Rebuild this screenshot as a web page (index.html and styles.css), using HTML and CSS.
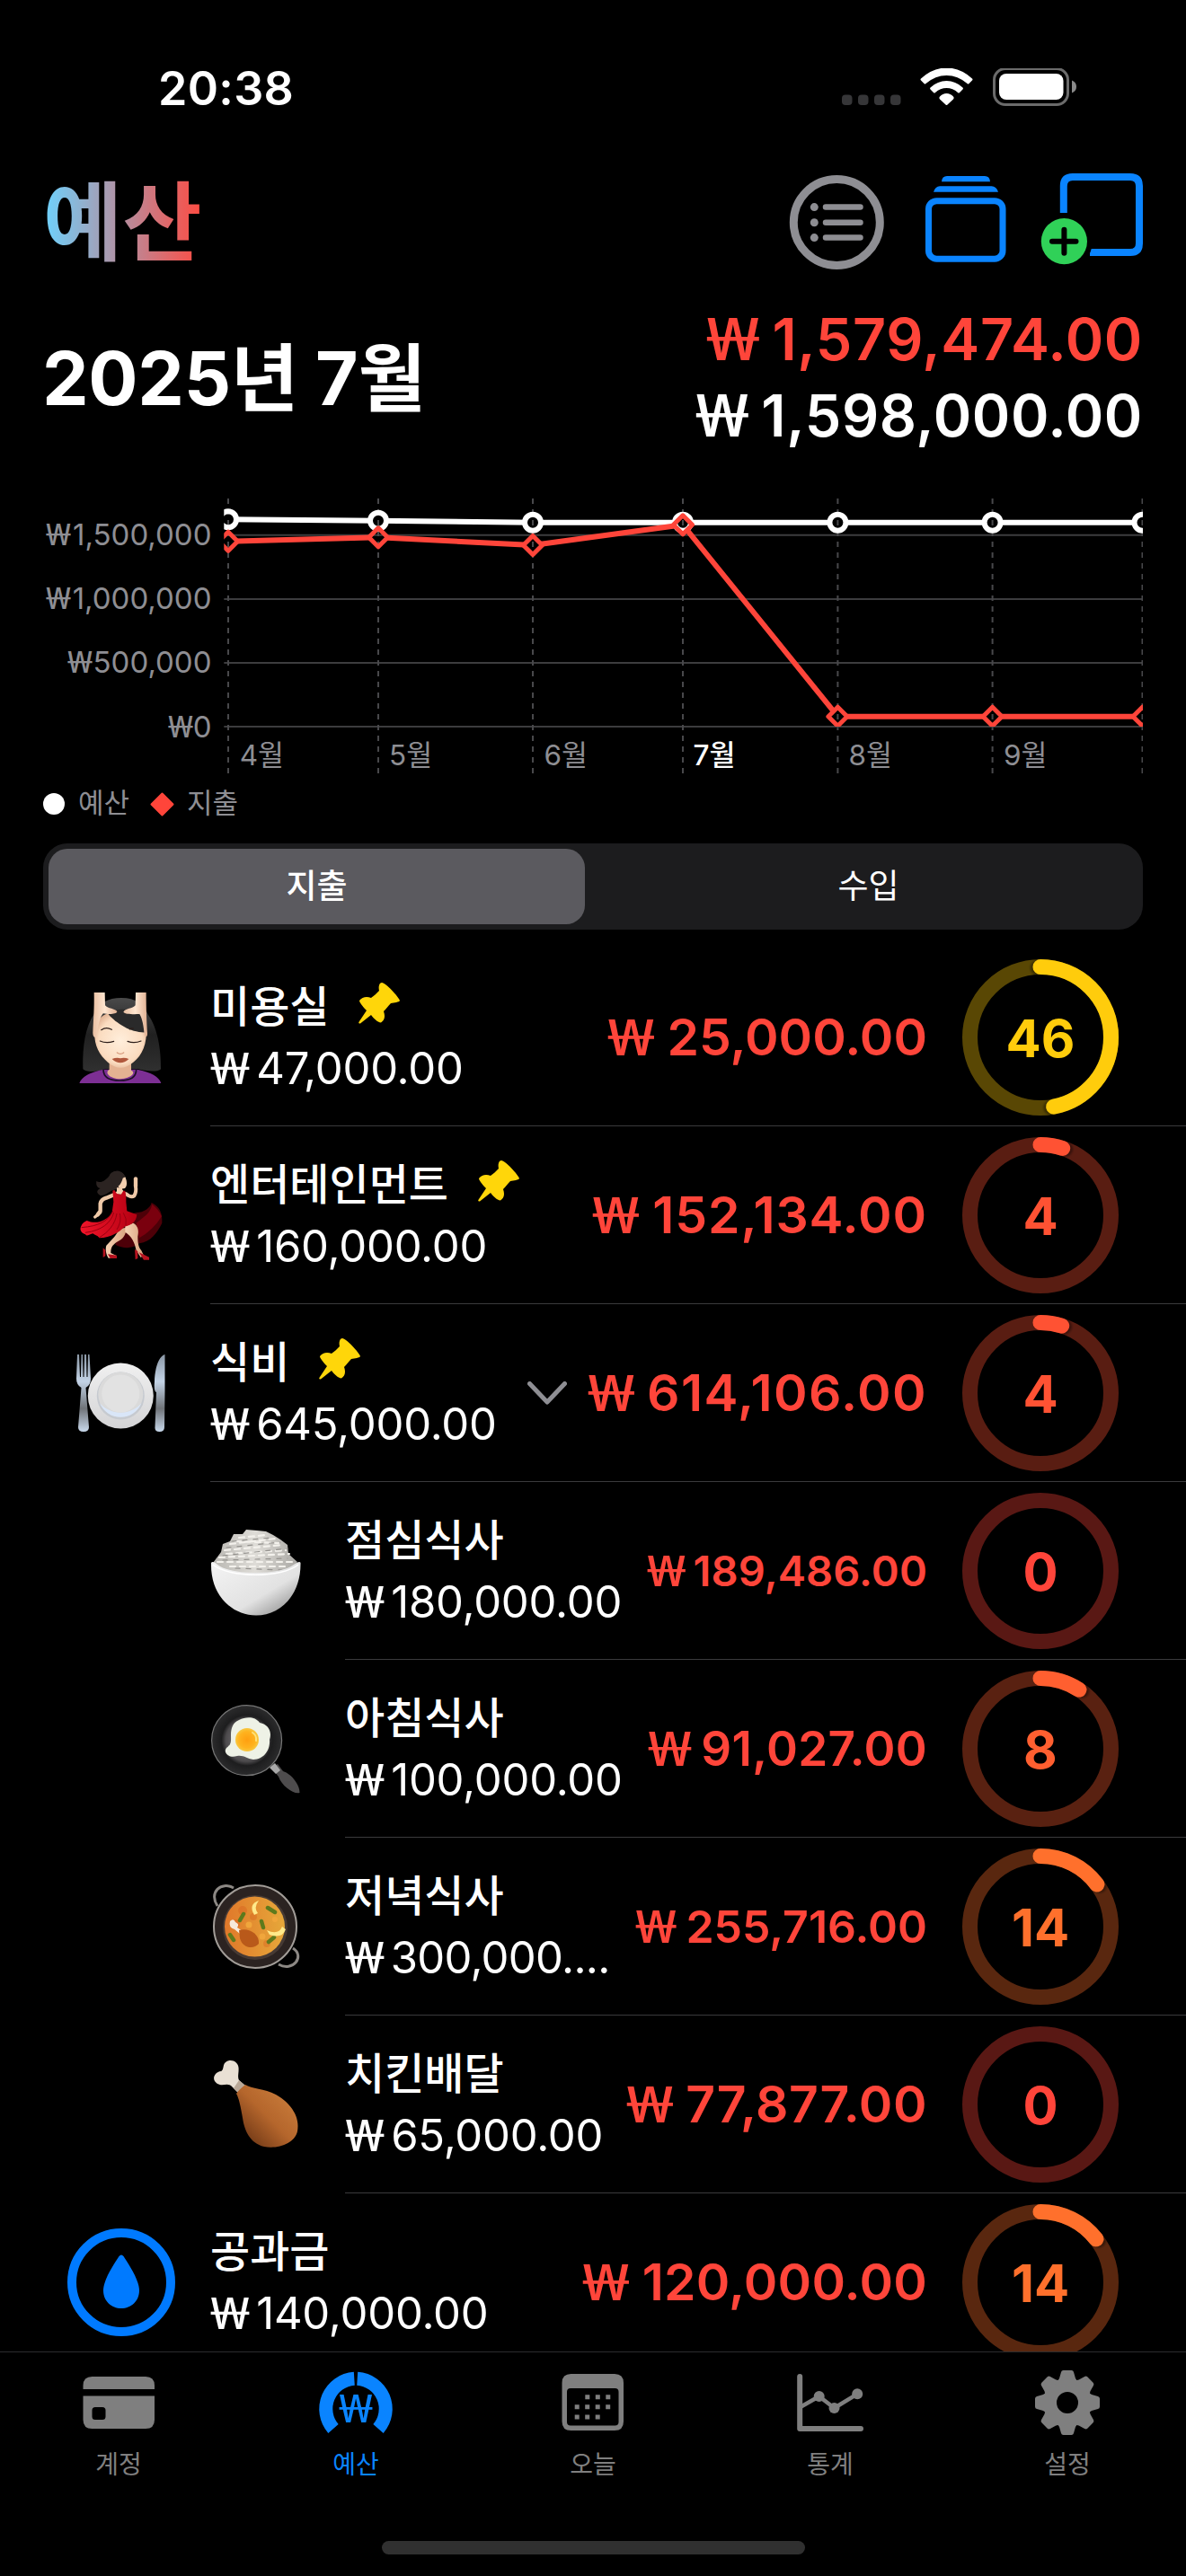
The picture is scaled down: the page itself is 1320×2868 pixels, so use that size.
FILE: index.html
```html
<!DOCTYPE html>
<html lang="ko">
<head>
<meta charset="utf-8">
<title>예산</title>
<link rel="stylesheet" href="styles.css">
</head>
<body>
<div class="status">
  <span class="status-time">20:38</span>
  <svg class="status-icons" width="264" height="44" viewBox="936 76 264 44">
    <g fill="#363638"><rect x="937" y="105.5" width="11.5" height="11.5" rx="4"/><rect x="955" y="105.5" width="11.5" height="11.5" rx="4"/><rect x="973" y="105.5" width="11.5" height="11.5" rx="4"/><rect x="991" y="105.5" width="11.5" height="11.5" rx="4"/></g>
    <g fill="#fff">
      <path d="M1025 87.500Q1038 75.500 1053.500 75.500T1082 87.500Q1083 88.500 1082 89.500L1078.500 93Q1077.500 94 1076.500 93Q1066 84 1053.500 84T1030.500 93Q1029.500 94 1028.500 93L1025 89.500Q1024 88.500 1025 87.500Z"/>
      <path d="M1035.500 97.500Q1043.500 90 1053.500 90T1071.500 97.500Q1072.500 98.500 1071.500 99.500L1068 103Q1067 104 1066 103Q1060.500 98 1053.500 98T1041 103Q1040 104 1039 103L1035.500 99.500Q1034.500 98.500 1035.500 97.500Z"/>
      <path d="M1046 107.500Q1049 104 1053.500 104T1061 107.500Q1062.500 109 1061 110.500L1054.500 116.500Q1053.500 117.500 1052.500 116.500L1046 110.500Q1044.500 109 1046 107.500Z"/>
    </g>
    <rect x="1106.500" y="76.500" width="82" height="40" rx="12.500" fill="none" stroke="#6b6b6b" stroke-width="3"/>
    <rect x="1112" y="82" width="71.500" height="29" rx="8" fill="#fff"/>
    <path d="M1193 89.500Q1198 91.500 1198 96.500T1193 103.500Z" fill="#8a8a8a"/>
  </svg>
</div>

<header class="header">
  <h1 class="title">예산</h1>
  <svg width="396" height="110" viewBox="878 192 396 110" fill="none">
    <g stroke="#8e8e93" stroke-linecap="round">
      <circle cx="931.300" cy="247.500" r="48" stroke-width="9"/>
      <path d="M919 230.600H957.500M919 247.700H957.500M919 264.600H957.500" stroke-width="6.500"/>
    </g>
    <g fill="#8e8e93"><circle cx="906.300" cy="230.600" r="4.500"/><circle cx="906.300" cy="247.700" r="4.500"/><circle cx="906.300" cy="264.600" r="4.500"/></g>
    <g fill="#0a84ff">
      <path d="M1048 202.200Q1048.500 196 1054 196H1096Q1101.500 196 1102 202.200Z"/>
      <path d="M1039 213.800Q1041 207.200 1046 207.200H1103.500Q1109 207.200 1111 213.800Z"/>
    </g>
    <rect x="1033.500" y="223.700" width="82.500" height="64.500" rx="9" stroke="#0a84ff" stroke-width="7"/>
    <path d="M1183.800 237V207Q1183.800 197 1193.800 197H1258Q1268 197 1268 207V271Q1268 281 1258 281H1213" stroke="#0a84ff" stroke-width="8"/>
    <circle cx="1184.400" cy="268.700" r="31.500" fill="#000"/>
    <circle cx="1184.400" cy="268.700" r="25.600" fill="#30d158"/>
    <path d="M1171 268.700H1197.500M1184.400 255.800V281.700" stroke="#000" stroke-width="6" stroke-linecap="round"/>
  </svg>
</header>

<section class="summary">
  <h2 class="month">2025년 7월</h2>
  <div class="totals">
    <div class="spent"><span class="won">₩</span> 1,579,474.00</div>
    <div><span class="won">₩</span> 1,598,000.00</div>
  </div>
</section>

<svg class="chart" width="1320" height="364" viewBox="0 506 1320 364">
  <defs>
    <clipPath id="plot"><rect x="249.300" y="540" width="1022.700" height="269"/></clipPath>
    <clipPath id="frame"><rect x="249.300" y="540" width="1022.700" height="330"/></clipPath>
    <mask id="cutBudget" maskUnits="userSpaceOnUse" x="0" y="506" width="1320" height="364">
      <rect x="0" y="506" width="1320" height="364" fill="#fff"/>
      <g fill="#000"><circle cx="254" cy="578.300" r="8"/><circle cx="421" cy="579.700" r="8"/><circle cx="593" cy="581.700" r="8"/><circle cx="760" cy="581.700" r="8"/><circle cx="932.400" cy="581.700" r="8"/><circle cx="1104.600" cy="581.700" r="8"/><circle cx="1271.500" cy="581.700" r="8"/></g>
    </mask>
    <mask id="cutSpent" maskUnits="userSpaceOnUse" x="0" y="506" width="1320" height="364">
      <rect x="0" y="506" width="1320" height="364" fill="#fff"/>
      <path fill="#000" d="M246 602.700l8-8 8 8-8 8zM413 598.300l8-8 8 8-8 8zM585 607l8-8 8 8-8 8zM752 584.300l8-8 8 8-8 8zM924.400 797.700l8-8 8 8-8 8zM1096.600 797.700l8-8 8 8-8 8zM1263.500 797.700l8-8 8 8-8 8z"/>
    </mask>
  </defs>
  <path class="grid" d="M249.300 595.700H1272M249.300 667H1272M249.300 738H1272M249.300 809H1272"/>
  <path class="grid grid-dash" clip-path="url(#frame)" d="M254 555V861M421 555V861M593 555V861M760 555V861M932.400 555V861M1104.600 555V861M1271.500 555V861"/>
  <g clip-path="url(#plot)" fill="none" stroke-width="6">
    <path mask="url(#cutBudget)" stroke="#fff" d="M254 578.300L421 579.700L593 581.700H1271.500"/>
    <g stroke="#fff"><circle cx="254" cy="578.300" r="9"/><circle cx="421" cy="579.700" r="9"/><circle cx="593" cy="581.700" r="9"/><circle cx="760" cy="581.700" r="9"/><circle cx="932.400" cy="581.700" r="9"/><circle cx="1104.600" cy="581.700" r="9"/><circle cx="1271.500" cy="581.700" r="9"/></g>
    <path mask="url(#cutSpent)" stroke="#ff453a" stroke-linejoin="round" d="M254 602.700L421 598.300L593 607L760 584.300L932.400 797.700H1271.500"/>
    <path stroke="#ff453a" stroke-width="5" stroke-linejoin="round" d="M243.500 602.700l10.500-10.500 10.500 10.500-10.500 10.500zM410.500 598.300l10.500-10.500 10.500 10.500-10.500 10.500zM582.500 607l10.500-10.500 10.500 10.500-10.500 10.500zM749.500 584.300l10.500-10.500 10.500 10.500-10.500 10.500zM921.900 797.700l10.500-10.500 10.500 10.500-10.500 10.500zM1094.100 797.700l10.500-10.500 10.500 10.500-10.500 10.500zM1261 797.700l10.500-10.500 10.500 10.500-10.500 10.500z"/>
  </g>
  <g class="axis axis-y">
    <text y="607.300"><tspan class="axis-won" x="51" textLength="28" lengthAdjust="spacingAndGlyphs">₩</tspan><tspan x="235.500">1,500,000</tspan></text>
    <text y="678.300"><tspan class="axis-won" x="51" textLength="28" lengthAdjust="spacingAndGlyphs">₩</tspan><tspan x="235.500">1,000,000</tspan></text>
    <text y="749.300"><tspan class="axis-won" x="75" textLength="28" lengthAdjust="spacingAndGlyphs">₩</tspan><tspan x="235.500">500,000</tspan></text>
    <text y="820.600"><tspan class="axis-won" x="187" textLength="28" lengthAdjust="spacingAndGlyphs">₩</tspan><tspan x="235.500">0</tspan></text>
  </g>
  <g class="axis">
    <text x="266.700" y="852">4월</text>
    <text x="433" y="852">5월</text>
    <text x="605.500" y="852">6월</text>
    <text x="771.500" y="852" class="axis-now">7월</text>
    <text x="944.500" y="852">8월</text>
    <text x="1117" y="852">9월</text>
  </g>
</svg>

<div class="legend">
  <svg width="24" height="24" viewBox="0 0 24 24"><circle cx="12" cy="12" r="12" fill="#fff"/></svg>
  <span class="legend-name">예산</span>
  <svg width="27" height="27" viewBox="0 0 27 27"><path d="M13.500 1.500L25.500 13.500L13.500 25.500L1.500 13.500Z" fill="#ff453a" stroke="#ff453a" stroke-width="2" stroke-linejoin="round"/></svg>
  <span class="legend-name">지출</span>
</div>

<div class="segmented">
  <div class="segment segment-on">지출</div>
  <div class="segment">수입</div>
</div>

<main class="list">
  <div class="row salon">
    <svg class="icon" viewBox="-24 6 378 378">
      <defs>
        <linearGradient id="hair" x1="0" y1="0" x2="0" y2="1"><stop offset="0" stop-color="#4a4a4a"/><stop offset=".5" stop-color="#202020"/><stop offset="1" stop-color="#303030"/></linearGradient>
        <radialGradient id="face" cx=".5" cy=".5" r=".6"><stop offset="0" stop-color="#ffeedb"/><stop offset=".7" stop-color="#fbdcc0"/><stop offset="1" stop-color="#dba888"/></radialGradient>
        <linearGradient id="arm" x1="0" y1="0" x2="1" y2="0"><stop offset="0" stop-color="#e9bfa2"/><stop offset=".5" stop-color="#ffe6d0"/><stop offset="1" stop-color="#e0b092"/></linearGradient>
      </defs>
      <path fill="url(#hair)" d="M165 63C215 63 240 85 255 120C285 160 299 235 297 300C290 312 245 308 220 300H110C85 312 45 312 37 300C35 225 45 160 75 115C90 80 120 63 165 63Z"/>
      <path fill="#7d2f94" d="M25 348C33 325 60 312 105 302H218C265 312 290 325 298 348Z"/>
      <path fill="#e4b292" d="M125 275H198V305C215 312 200 330 162 334C125 332 108 312 125 302Z"/>
      <path fill="none" stroke="#1c0f26" stroke-width="5" d="M105 302C105 330 130 339 160 339S215 330 215 302"/>
      <path fill="url(#face)" d="M76 180C80 145 95 120 122 115C165 120 200 150 248 165C252 215 235 255 205 278C175 302 150 302 120 278C92 255 74 220 76 180Z"/>
      <path fill="#2a2a2a" d="M122 118C150 150 200 182 250 178L246 130C225 100 150 90 122 118Z"/>
      <g fill="none" stroke="#2b1c18" stroke-width="3.500" stroke-linecap="round"><path d="M94 207Q115 216 140 208M186 208Q208 216 231 207"/><path d="M98 170Q115 158 133 169M193 168Q200 163 205 165"/></g>
      <path fill="none" stroke="#d79b7d" stroke-width="4" stroke-linecap="round" d="M151 246Q162 254 173 246"/>
      <path fill="#b0583d" d="M134 267Q150 261 162 265Q175 261 190 267Q176 280 162 280T134 267Z"/>
      <path fill="url(#arm)" d="M74 45H110L111 88C120 100 145 98 151 109C149 119 120 118 105 115C92 125 84 180 82 192C76 199 70 192 70 180C72 135 75 100 74 45Z"/>
      <path fill="url(#arm)" d="M213 45H248C248 100 250 150 252 180C253 196 244 196 242 186C240 160 235 130 226 117C205 118 178 118 172 110C178 97 203 100 212 88Z"/>
    </svg>
    <div class="body">
      <div class="info"><div class="name">미용실<svg class="pin" viewBox="0 0 46 46"><path d="M26 0C30 0 45 16 46 20C45 22 40 22 36 23C33 26 31 29 28 32C30 38 29 42 25 44.500C21 44 17 40 14 36L2 45.500Q-1 46 1 43L9 31C5 27 1 22 1 20C4 16 9 15 14 17C17 15 20 12 23 9C22 5 23 0 26 0Z"/></svg></div><div class="limit"><span class="won">₩</span> 47,000.00</div></div>
      <div class="amount"><span class="won">₩</span> 25,000.00</div>
      <svg class="ring ring-late" viewBox="0 0 174 174"><circle class="track" cx="87" cy="87" r="78.500"/><circle class="arc" cx="87" cy="87" r="78.500" pathLength="100" stroke-dasharray="47 100"/><text x="87" y="109">46</text></svg>
    </div>
  </div>

  <div class="row fun">
    <svg class="icon" viewBox="-24 -15 378 378">
      <defs>
        <linearGradient id="dress" x1="0" y1="0" x2="1" y2="0"><stop offset="0" stop-color="#f2152a"/><stop offset="1" stop-color="#b30012"/></linearGradient>
        <linearGradient id="skin" x1="0" y1="0" x2="1" y2="0"><stop offset="0" stop-color="#f6d3b4"/><stop offset="1" stop-color="#d9a27e"/></linearGradient>
      </defs>
      <path fill="#4d0008" d="M160 180L215 165C240 165 262 150 266 132C292 145 303 165 301 200C285 232 265 262 225 268C200 288 170 285 145 272Z"/>
      <path fill="#7a000e" d="M215 200L240 180Q262 165 268 138Q290 155 300 178Q270 225 225 250Z"/>
      <path fill="url(#skin)" d="M157 220L182 215C180 240 175 250 148 265C135 275 130 282 130 300L150 310V317H122C112 300 112 285 115 275C135 255 150 240 157 220Z"/>
      <path fill="url(#skin)" d="M178 210L205 200C222 210 224 225 220 245C220 265 222 280 232 292L240 308L230 315L215 292C210 265 200 245 178 230Z"/>
      <g fill="#b5121f"><path d="M104 283L112 290V310L104 315ZM120 304L150 308V318H128ZM210 288L220 294V318L212 322ZM224 298L258 314V323H240Z"/></g>
      <path fill="#2b2321" d="M178 46C170 22 140 20 127 38C118 55 95 70 82 60C80 75 85 82 95 84C85 90 78 98 95 108C115 110 125 92 145 88L165 84Z"/>
      <g fill="none" stroke="#efc9a8" stroke-linecap="round" stroke-linejoin="round">
        <path stroke-width="13" d="M144 104L115 116Q98 121 95 135V160L86 172"/>
        <path stroke-width="10" d="M95 165L77 180"/>
        <path stroke-width="12" d="M180 102Q198 117 208 109Q216 97 213 78"/>
        <path stroke-width="13" d="M213 76V52"/>
      </g>
      <path fill="#f3cfaf" d="M150 82H168V88L182 104H138L150 94Z"/>
      <path fill="#f3cfaf" d="M160 48L178 46C184 60 186 76 177 84C166 88 156 84 152 72Z"/>
      <path fill="#2b2321" d="M178 46C170 22 140 20 127 38L140 84C158 80 166 66 170 50Z"/>
      <path fill="url(#dress)" d="M136 92L142 90L150 102L164 105L172 92L178 92L181 112V130L184 160L217 172C215 195 200 208 175 212C160 230 130 248 92 250C85 240 75 240 70 235C55 240 50 245 45 238C30 232 26 222 30 212C35 200 42 195 50 192C80 205 115 195 134 165L139 130Z"/>
      <g fill="none" stroke="#97000f" stroke-width="3"><path d="M140 165C130 200 100 225 45 232M150 168C145 205 120 232 92 248M160 168C165 190 160 205 150 222M172 166Q185 185 180 208M137 160C120 195 90 210 32 215"/></g>
    </svg>
    <div class="body">
      <div class="info"><div class="name">엔터테인먼트<svg class="pin" viewBox="0 0 46 46"><path d="M26 0C30 0 45 16 46 20C45 22 40 22 36 23C33 26 31 29 28 32C30 38 29 42 25 44.500C21 44 17 40 14 36L2 45.500Q-1 46 1 43L9 31C5 27 1 22 1 20C4 16 9 15 14 17C17 15 20 12 23 9C22 5 23 0 26 0Z"/></svg></div><div class="limit"><span class="won">₩</span> 160,000.00</div></div>
      <div class="amount"><span class="won">₩</span> 152,134.00</div>
      <svg class="ring" viewBox="0 0 174 174"><circle class="track" cx="87" cy="87" r="78.500"/><circle class="arc" cx="87" cy="87" r="78.500" pathLength="100" stroke-dasharray="5.100 100"/><text x="87" y="109">4</text></svg>
    </div>
  </div>

  <div class="row food">
    <svg class="icon" viewBox="0 0 126 126">
      <defs>
        <linearGradient id="steel" x1="0" y1="0" x2="0" y2="1"><stop offset="0" stop-color="#8a97a5"/><stop offset=".35" stop-color="#c3d3e6"/><stop offset=".7" stop-color="#6f7378"/><stop offset="1" stop-color="#c9d9ec"/></linearGradient>
        <linearGradient id="plate" x1="0" y1="0" x2="0" y2="1"><stop offset="0" stop-color="#f0f0f0"/><stop offset="1" stop-color="#d4d4d6"/></linearGradient>
      </defs>
      <path fill="url(#steel)" d="M14 20H16L17 45H18L18.500 20H20L20.500 45H21.500L22 20H24L24.500 45H25.500L26 20H27.500L29 47Q29 54 23.500 57L27 101Q27 106 21 106T15 101L18.500 57Q13 54 13 47Z"/>
      <path fill="url(#steel)" d="M111.500 20V61L111 101Q111 106 105.500 106T100.500 101L102 62Q99 61 100 50C100 38 104 22 111.500 20Z"/>
      <circle cx="62.300" cy="66" r="36.500" fill="url(#plate)"/>
      <circle cx="62.300" cy="66" r="26.500" fill="#c6cad0"/>
      <circle cx="62.300" cy="64.500" r="25" fill="#dadada"/>
      <path d="M39 74A25 25 0 0 0 85.500 74A28 24 0 0 1 39 74Z" fill="#d9e6f8"/>
      <circle cx="62.300" cy="63.500" r="21" fill="#e2e2e2"/>
    </svg>
    <div class="body">
      <div class="info"><div class="name">식비<svg class="pin" viewBox="0 0 46 46"><path d="M26 0C30 0 45 16 46 20C45 22 40 22 36 23C33 26 31 29 28 32C30 38 29 42 25 44.500C21 44 17 40 14 36L2 45.500Q-1 46 1 43L9 31C5 27 1 22 1 20C4 16 9 15 14 17C17 15 20 12 23 9C22 5 23 0 26 0Z"/></svg></div><div class="limit"><span class="won">₩</span> 645,000.00</div></div>
      <svg class="chevron" viewBox="0 0 44 26"><path d="M2.500 2.500L22 23L41.500 2.500"/></svg>
      <div class="amount"><span class="won">₩</span> 614,106.00</div>
      <svg class="ring" viewBox="0 0 174 174"><circle class="track" cx="87" cy="87" r="78.500"/><circle class="arc" cx="87" cy="87" r="78.500" pathLength="100" stroke-dasharray="4.900 100"/><text x="87" y="109">4</text></svg>
    </div>
  </div>

  <div class="row sub lunch">
    <svg class="icon" viewBox="0 0 126 126">
      <defs>
        <linearGradient id="bowl" x1="0" y1="0" x2="1" y2="1"><stop offset="0" stop-color="#f4f4f4"/><stop offset=".6" stop-color="#e2e2e2"/><stop offset="1" stop-color="#7d7d7d"/></linearGradient>
        <linearGradient id="rice" x1="0" y1="0" x2="1" y2="0"><stop offset="0" stop-color="#b9b7b2"/><stop offset=".5" stop-color="#dedcd7"/><stop offset="1" stop-color="#aaa8a4"/></linearGradient>
      </defs>
      <path fill="url(#rice)" d="M15 54L24 42L26 33L34 30L38 22L48 22L52 17L64 18L74 19L82 23L90 28L98 34L99 44L109 53L98 66H28Z"/>
      <path fill="none" stroke="#f3f1ec" stroke-width="2.200" stroke-linecap="round" stroke-dasharray="6 5" d="M28 40L92 34M34 33L84 27M44 26L74 23M22 48L100 44M20 53L104 53M30 44L96 40M40 30L88 32M34 58L96 58"/>
      <path fill="none" stroke="#94928e" stroke-width="1.200" stroke-linecap="round" stroke-dasharray="5 7" d="M30 37L90 31M36 30L80 26M26 51L98 49M26 46L98 38M40 60L92 62"/>
      <path fill="url(#bowl)" d="M13 54C14 52 17 53 20 56C35 68 90 68 105 56C109 53 112 52 112.500 54C113 90 90 112.500 63 112.500S12 90 13 54Z"/>
      <path fill="none" stroke="#fff" stroke-width="1.500" d="M15 56C33 71 92 71 110 56"/>
    </svg>
    <div class="body">
      <div class="info"><div class="name">점심식사</div><div class="limit"><span class="won">₩</span> 180,000.00</div></div>
      <div class="amount"><span class="won">₩</span> 189,486.00</div>
      <svg class="ring" viewBox="0 0 174 174"><circle class="track" cx="87" cy="87" r="78.500"/><text x="87" y="109">0</text></svg>
    </div>
  </div>

  <div class="row sub breakfast">
    <svg class="icon" viewBox="0 0 126 126">
      <defs>
        <radialGradient id="pan" cx=".5" cy=".5" r=".5"><stop offset="0" stop-color="#8a868a"/><stop offset=".6" stop-color="#4c4a4c"/><stop offset=".72" stop-color="#1d1d1e"/><stop offset="1" stop-color="#2b2b2c"/></radialGradient>
        <radialGradient id="yolk" cx=".5" cy=".5" r=".5"><stop offset="0" stop-color="#ff9f10"/><stop offset=".7" stop-color="#ffb31f"/><stop offset="1" stop-color="#f8c840"/></radialGradient>
      </defs>
      <path d="M80 84L87 80L93 88C103 91 112 104 111.500 112C105 114 92 105 88 94Z" fill="#4e4c4d"/>
      <path d="M78 84L84 79L90 87L85 91Z" fill="#a9a9a9"/>
      <circle cx="52.600" cy="53.700" r="39" fill="url(#pan)" stroke="#777" stroke-width="1.200"/>
      <path fill="#eef2e6" d="M44 31C52 27 62 27 67 34C77 36 81 44 78 53C79 64 72 75 60 75C52 74 50 70 42 71C32 74 26 67 30 62C36 58 35 54 35 48C35 40 37 34 44 31Z"/>
      <circle cx="53" cy="53" r="13" fill="url(#yolk)"/>
      <path d="M59 45Q64 48 63 54" fill="none" stroke="#ffe27a" stroke-width="2" stroke-linecap="round"/>
    </svg>
    <div class="body">
      <div class="info"><div class="name">아침식사</div><div class="limit"><span class="won">₩</span> 100,000.00</div></div>
      <div class="amount"><span class="won">₩</span> 91,027.00</div>
      <svg class="ring" viewBox="0 0 174 174"><circle class="track" cx="87" cy="87" r="78.500"/><circle class="arc" cx="87" cy="87" r="78.500" pathLength="100" stroke-dasharray="9.200 100"/><text x="87" y="109">8</text></svg>
    </div>
  </div>

  <div class="row sub dinner">
    <svg class="icon" viewBox="0 0 126 126">
      <defs>
        <linearGradient id="stew" x1="0" y1="0" x2="1" y2="0"><stop offset="0" stop-color="#e0782a"/><stop offset="1" stop-color="#e6a83a"/></linearGradient>
      </defs>
      <g fill="none" stroke="#8c8884" stroke-width="3"><path d="M20 40C10 25 24 12 38 20"/><path d="M104 87C118 96 104 114 88 105"/></g>
      <circle cx="62" cy="63" r="46" fill="#2b2321" stroke="#a29d98" stroke-width="2"/>
      <circle cx="62" cy="64" r="36" fill="#463a34"/>
      <circle cx="61.500" cy="63" r="33.500" fill="url(#stew)"/>
      <g fill="#d2531a" opacity=".3"><circle cx="48" cy="45" r="5"/><circle cx="75" cy="82" r="4"/><circle cx="60" cy="52" r="4"/><circle cx="40" cy="60" r="5"/></g>
      <g fill="none" stroke="#5e7a1c" stroke-width="4.500" stroke-linecap="round"><path d="M45 56L49 49M76 42L84 47M69 57L71 64M77 80L83 75M34 72L38 78"/></g>
      <path d="M66 34Q54 38 61 50L65 48Q60 42 66 34Z" fill="#ffe98a"/><path d="M75 67Q88 73 92 63L96 66Q92 77 78 72Z" fill="#ffe98a"/>
      <path d="M34 57Q38 53 40 58Q45 60 42 64L48 68L45 71L39 66Q32 64 34 57Z" fill="#f6eada"/>
      <path d="M44 67C56 64 67 72 66 82C60 89 48 87 45 76Z" fill="#b9591a"/>
      <g fill="#f0a63c"><circle cx="55" cy="61" r="3.500"/><circle cx="70" cy="74" r="3.500"/><circle cx="84" cy="55" r="3"/></g>
    </svg>
    <div class="body">
      <div class="info"><div class="name">저녁식사</div><div class="limit"><span class="won">₩</span> 300,000....</div></div>
      <div class="amount"><span class="won">₩</span> 255,716.00</div>
      <svg class="ring" viewBox="0 0 174 174"><circle class="track" cx="87" cy="87" r="78.500"/><circle class="arc" cx="87" cy="87" r="78.500" pathLength="100" stroke-dasharray="14.800 100"/><text x="87" y="109">14</text></svg>
    </div>
  </div>

  <div class="row sub chicken">
    <svg class="icon" viewBox="0 0 126 126">
      <defs>
        <linearGradient id="meat" x1="1" y1="0" x2="0" y2="1"><stop offset="0" stop-color="#d08440"/><stop offset=".5" stop-color="#b5662c"/><stop offset="1" stop-color="#5a290f"/></linearGradient>
      </defs>
      <path fill="#e9e0d4" d="M28 17C34 11 43 15 43.500 22C44 28 42 32 44 36L51 42L43 50L35 42C30 39 26 43 20 40C13 36 16 27 24 26C27 25 26 20 28 17Z"/>
      <path fill="#b9a897" d="M44 36L51 42L43 50L38 45Z"/>
      <path fill="url(#meat)" d="M51 41C58 46 72 45 85 52C103 62 112 78 109 93C106 106 88 113 72 110C56 106 50 92 48 78C46 66 44 56 41 51C43 48 47 44 51 41Z"/>
    </svg>
    <div class="body">
      <div class="info"><div class="name">치킨배달</div><div class="limit"><span class="won">₩</span> 65,000.00</div></div>
      <div class="amount"><span class="won">₩</span> 77,877.00</div>
      <svg class="ring" viewBox="0 0 174 174"><circle class="track" cx="87" cy="87" r="78.500"/><text x="87" y="109">0</text></svg>
    </div>
  </div>

  <div class="row bills">
    <svg class="icon" viewBox="0 0 126 126"><circle cx="63" cy="63" r="55" fill="none" stroke="#007aff" stroke-width="10"/><path fill="#007aff" d="M60.500 34Q63 31 65.500 34C70 41 83 60 83 72C83 84 74 92 63 92S43 84 43 72C43 60 56 41 60.500 34Z"/></svg>
    <div class="body">
      <div class="info"><div class="name">공과금</div><div class="limit"><span class="won">₩</span> 140,000.00</div></div>
      <div class="amount"><span class="won">₩</span> 120,000.00</div>
      <svg class="ring" viewBox="0 0 174 174"><circle class="track" cx="87" cy="87" r="78.500"/><circle class="arc" cx="87" cy="87" r="78.500" pathLength="100" stroke-dasharray="14.500 100"/><text x="87" y="109">14</text></svg>
    </div>
  </div>
</main>

<nav class="tabs">
  <div class="tab">
    <svg width="92" height="80" viewBox="86 2636 92 80"><path fill="#7f7f7f" fill-rule="evenodd" d="M92.500 2660V2656Q92.500 2646 102.500 2646H162Q172 2646 172 2656V2660ZM92.500 2667.500H172V2694Q172 2704 162 2704H102.500Q92.500 2704 92.500 2694ZM106 2680Q102.500 2680 102.500 2683.500V2690.500Q102.500 2694 106 2694H114Q117.500 2694 117.500 2690.500V2683.500Q117.500 2680 114 2680Z"/></svg>
    <span>계정</span>
  </div>
  <div class="tab tab-on">
    <svg width="92" height="80" viewBox="349 2636 92 80"><path fill="none" stroke="#0a84ff" stroke-width="15" d="M393.300 2648.300A33.700 33.700 0 0 0 370 2704M396.700 2648.300A33.700 33.700 0 0 1 420 2704"/><text x="376" y="2697.300" font-size="43" textLength="38" lengthAdjust="spacingAndGlyphs">₩</text></svg>
    <span>예산</span>
  </div>
  <div class="tab">
    <svg width="92" height="80" viewBox="614 2636 92 80"><path fill="#7f7f7f" fill-rule="evenodd" d="M635.500 2643H684Q694 2643 694 2653V2696Q694 2706 684 2706H635.500Q625.500 2706 625.500 2696V2653Q625.500 2643 635.500 2643ZM635 2659Q631 2659 631 2663V2696.500Q631 2700.500 635 2700.500H684.500Q688.500 2700.500 688.500 2696.500V2663Q688.500 2659 684.500 2659Z"/><path d="M651.300 2668.700H680M639.700 2679.700H680M639.700 2691H668" stroke="#7f7f7f" stroke-width="5" stroke-dasharray="5 6.500"/></svg>
    <span>오늘</span>
  </div>
  <div class="tab">
    <svg width="92" height="80" viewBox="878 2636 92 80"><g fill="none" stroke="#7f7f7f" stroke-linecap="round" stroke-linejoin="round"><path stroke-width="6" d="M890.200 2646V2704H958"/><path stroke-width="4.500" d="M892 2679.300L911.700 2668L928.500 2681L954.200 2665.300"/></g><g fill="#7f7f7f"><circle cx="911.700" cy="2668" r="6"/><circle cx="928.500" cy="2681" r="6"/><circle cx="954.200" cy="2665.300" r="6"/></g></svg>
    <span>통계</span>
  </div>
  <div class="tab">
    <svg width="92" height="80" viewBox="-46 -39 92 80">
      <defs><path id="tooth" d="M-11 -24L-9 -27L-7 -34Q-6.500 -36 -4.500 -36H4.500Q6.500 -36 7 -34L9 -27L11 -24Z"/></defs>
      <g fill="#7f7f7f"><path fill-rule="evenodd" d="M0 -27A27 27 0 1 0 0 27A27 27 0 1 0 0 -27ZM0 -12A12 12 0 1 1 0 12A12 12 0 1 1 0 -12Z"/>
      <use href="#tooth"/><use href="#tooth" transform="rotate(45)"/><use href="#tooth" transform="rotate(90)"/><use href="#tooth" transform="rotate(135)"/><use href="#tooth" transform="rotate(180)"/><use href="#tooth" transform="rotate(225)"/><use href="#tooth" transform="rotate(270)"/><use href="#tooth" transform="rotate(315)"/></g>
    </svg>
    <span>설정</span>
  </div>
</nav>
<div class="home"></div>
</body>
</html>
```
FILE: styles.css
```css
* {
  box-sizing: border-box;
}

body {
  margin: 0;
  width: 1320px;
  height: 2868px;
  overflow: hidden;
  background: #000;
  color: #fff;
  font-family: Inter, "Noto Sans CJK KR", sans-serif;
}

svg {
  display: block;
  flex: none;
}

/* single-bar won sign, widened to sit with the digits */
.won {
  display: inline-block;
  width: 0.92em;
  font-family: "Noto Sans", sans-serif;
  font-weight: 500;
  line-height: 1;
  letter-spacing: 0;
  text-align: left;
  transform: scaleX(1.34);
  transform-origin: 0 50%;
}

/* status bar */
.status {
  display: flex;
  justify-content: space-between;
  align-items: center;
  height: 156px;
  padding: 40px 120px 0 176px;
}

.status-time {
  font-size: 52px;
  font-weight: 600;
  letter-spacing: 0.3px;
}

/* page header */
.header {
  display: flex;
  justify-content: space-between;
  align-items: center;
  height: 180px;
  padding: 2px 46px 0 47px;
}

.title {
  margin: 0;
  padding: 0 1px;
  font-size: 96px;
  line-height: 130px;
  font-weight: 700;
  background: linear-gradient(90deg, #6cd3ff, #ff4a40);
  background-clip: text;
  -webkit-background-clip: text;
  color: transparent;
}

.summary {
  display: flex;
  justify-content: space-between;
  height: 170px;
  padding: 0 48px 0 47px;
}

.month {
  margin: 0;
  font-size: 82px;
  line-height: 171px;
  font-weight: 700;
  letter-spacing: -0.3px;
}

.totals {
  font-size: 64.5px;
  line-height: 85px;
  font-weight: 600;
  letter-spacing: 0.6px;
  word-spacing: -3px;
  text-align: right;
}

.spent {
  color: #ff453a;
}

/* trend chart */
.grid {
  fill: none;
  stroke: #3c3c3e;
  stroke-width: 2;
}

.grid-dash {
  stroke: #48484b;
  stroke-dasharray: 6 6;
}

.axis {
  fill: #8e8e93;
  font-size: 31.500px;
}

.axis-y {
  font-size: 33px;
  text-anchor: end;
}

.axis-won {
  font-family: "Noto Sans", sans-serif;
  text-anchor: start;
}

.axis-now {
  fill: #fff;
  font-weight: 500;
}

.legend {
  display: flex;
  align-items: center;
  height: 50px;
  padding-left: 48px;
  color: #8e8e93;
  font-size: 31px;
}

.legend-name {
  height: 50px;
  margin: 0 23px 0 15px;
  line-height: 48px;
}

.legend-name:last-child {
  margin-left: 14px;
}

.segmented {
  display: flex;
  height: 96px;
  margin: 19px 48px 21px;
  padding: 6px;
  border-radius: 27px;
  background: #1c1c1e;
}

.segment {
  flex: 1;
  border-radius: 21px;
  font-size: 37px;
  line-height: 84px;
  text-align: center;
  padding-left: 16px;
}

.segment-on {
  flex: none;
  width: 597px;
  padding: 0;
  background: #5b5a5f;
  font-weight: 500;
}

/* budget list */
.list {
  height: 1562px;
  overflow: hidden;
}

.row {
  display: flex;
  align-items: center;
  height: 198px;
  padding-left: 72px;
  --tint: #ff5233;
  --track: #591d12;
}

.sub {
  padding-left: 222px;
}

.icon {
  width: 126px;
  height: 126px;
}

.body {
  display: flex;
  flex: 1;
  align-items: center;
  height: 198px;
  margin-left: 36px;
  padding-right: 75px;
  border-bottom: 1px solid #3a3a3c;
}

.info {
  flex: 1;
  white-space: nowrap;
}

.name {
  display: flex;
  align-items: center;
  height: 68px;
  font-size: 48px;
  line-height: 69px;
  font-weight: 500;
}

.pin {
  width: 46px;
  height: 46px;
  margin: -8px 0 0 33px;
  fill: #ffd60a;
}

.limit {
  height: 68px;
  font-size: 49px;
  line-height: 69px;
  letter-spacing: -0.2px;
  word-spacing: -6.500px;
}

.limit .won {
  width: 0.9em;
  font-weight: 400;
}

.chevron {
  width: 44px;
  height: 26px;
  margin-right: 23px;
  fill: none;
  stroke: #8e8e93;
  stroke-width: 5px;
  stroke-linecap: round;
  stroke-linejoin: round;
}

.amount {
  color: #ff453a;
  font-size: 57px;
  line-height: 70px;
  font-weight: 600;
  white-space: nowrap;
}

.ring {
  width: 174px;
  height: 174px;
  margin-left: 39px;
}

.ring circle {
  fill: none;
  stroke-width: 17px;
}

.ring .track {
  stroke: var(--track);
}

.ring .arc {
  stroke: var(--tint);
  stroke-linecap: round;
  transform: rotate(-90deg);
  transform-origin: 50% 50%;
  filter: drop-shadow(-1px 3px 1px rgba(0, 0, 0, 0.35));
}

.ring-late .arc {
  filter: drop-shadow(-1px -3px 1px rgba(0, 0, 0, 0.35));
}

.ring text {
  fill: var(--tint);
  font-size: 58px;
  font-weight: 700;
  text-anchor: middle;
}

.salon { --tint: #ffcc0c; --track: #594704; }
.lunch, .chicken { --tint: #ff453a; --track: #591814; }
.breakfast { --tint: #ff5f30; --track: #592111; }
.dinner, .bills { --tint: #ff702c; --track: #59270f; }

.fun .amount { letter-spacing: 0.9px; }
.food .amount { letter-spacing: 1.4px; word-spacing: -2px; }
.lunch .amount { font-size: 47px; letter-spacing: 0.1px; word-spacing: -4px; }
.breakfast .amount { font-size: 53px; letter-spacing: 0.3px; word-spacing: -3px; }
.dinner .amount { font-size: 50px; word-spacing: -2px; }
.dinner .limit { letter-spacing: -0.7px; }
.chicken .amount { letter-spacing: 0.5px; word-spacing: -1px; }
.bills .amount { letter-spacing: 0.2px; }

/* tab bar */
.tabs {
  display: flex;
  height: 211px;
  border-top: 1px solid #2c2c2e;
}

.tab {
  display: flex;
  flex: 1;
  flex-direction: column;
  align-items: center;
  padding-top: 17px;
  color: #7f7f7f;
  font-size: 28px;
  line-height: 56px;
}

.tab-on {
  color: #0a84ff;
}

.tab text {
  fill: #0a84ff;
  font-family: "Noto Sans", sans-serif;
}

.home {
  width: 471px;
  height: 15px;
  margin: 0 auto;
  border-radius: 8px;
  background: #303030;
}
```
